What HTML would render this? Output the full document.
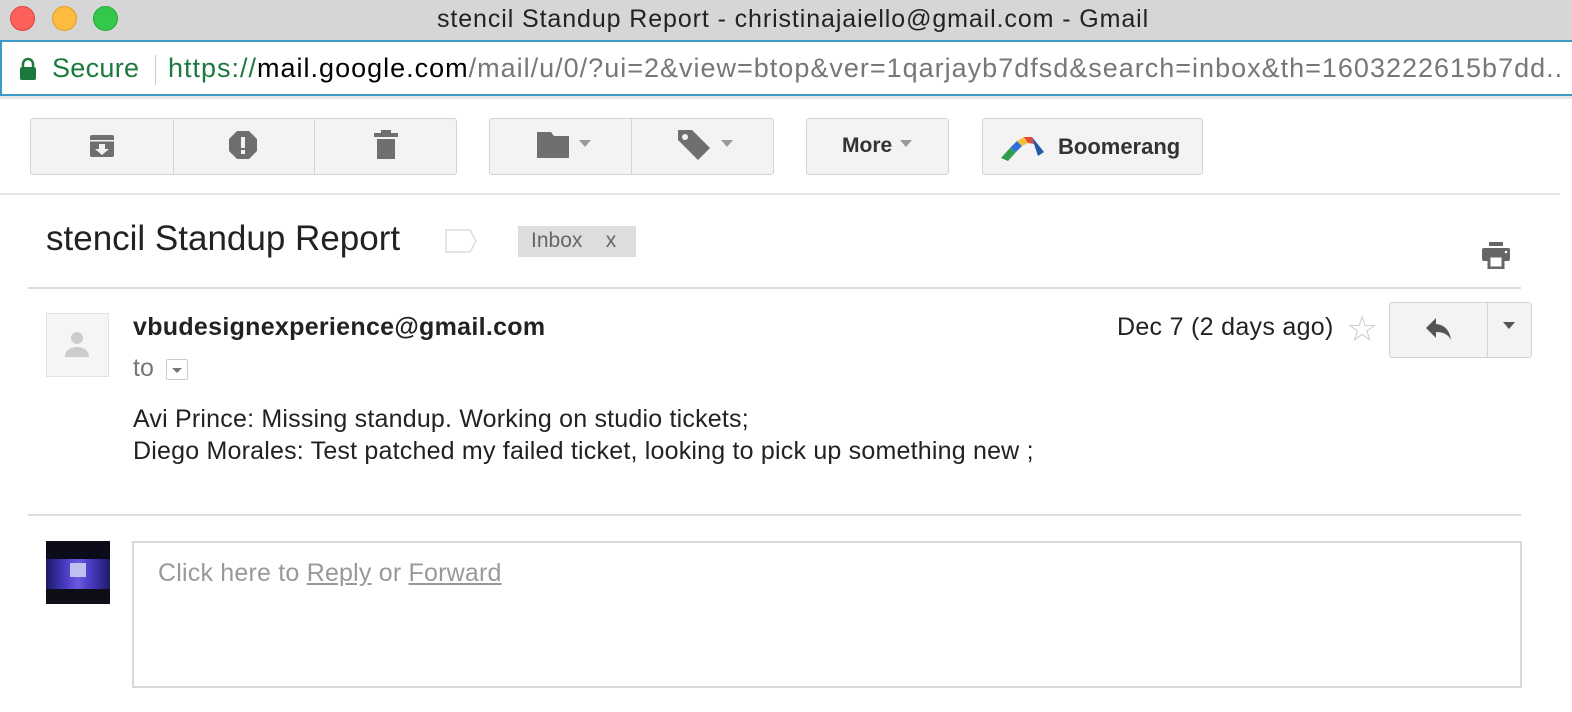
<!DOCTYPE html>
<html><head><style>
*{margin:0;padding:0;box-sizing:border-box}
body{width:1572px;height:712px;overflow:hidden;background:#fff;font-family:"Liberation Sans",Arial,sans-serif;position:relative}
.abs{position:absolute}
.btn{position:absolute;top:118px;height:57px;background:#f3f3f3;border:1px solid #d3d3d3;border-radius:3px}
.sep{position:absolute;top:0;width:1px;height:100%;background:#d3d3d3}
.tri{width:0;height:0;border-left:6px solid transparent;border-right:6px solid transparent;border-top:7px solid #999;position:absolute}
</style></head><body>
<div class="abs" style="left:0;top:0;width:1572px;height:40px;background:#d6d6d6"></div>
<div class="abs" style="left:10px;top:6px;width:25px;height:25px;border-radius:50%;background:#fc605b;border:1px solid #e0443e"></div>
<div class="abs" style="left:52px;top:6px;width:25px;height:25px;border-radius:50%;background:#fdbc40;border:1px solid #dea123"></div>
<div class="abs" style="left:93px;top:6px;width:25px;height:25px;border-radius:50%;background:#34c84a;border:1px solid #27aa35"></div>
<div class="abs" style="left:437px;top:5px;font-size:25px;letter-spacing:0.9px;color:#222;white-space:nowrap">stencil Standup Report - christinajaiello@gmail.com - Gmail</div>
<div class="abs" style="left:0;top:40px;width:1572px;height:56px;background:#fff;border-top:2px solid #3a9bc6;border-bottom:2px solid #3a9bc6;border-left:2px solid #3a9bc6"></div>
<div class="abs" style="left:0;top:96px;width:1572px;height:3px;background:#e6e6e6"></div>
<svg class="abs" style="left:19px;top:57px" width="18" height="24" viewBox="0 0 18 24"><path d="M4 10V7a5 5 0 0 1 10 0v3" fill="none" stroke="#1d7a3e" stroke-width="2.5"/><rect x="1" y="10" width="16" height="13" rx="2" fill="#1d7a3e"/></svg>
<div class="abs" style="left:52px;top:53px;font-size:27px;letter-spacing:0.3px;color:#1d7a3e">Secure</div>
<div class="abs" style="left:155px;top:55px;width:1px;height:30px;background:#ccc"></div>
<div class="abs" style="left:168px;top:53px;font-size:27px;letter-spacing:1px;white-space:nowrap;color:#777"><span style="color:#1d7a3e">https://</span><span style="color:#000">mail.google.com</span>/mail/u/0/?ui=2&amp;view=btop&amp;ver=1qarjayb7dfsd&amp;search=inbox&amp;th=1603222615b7dd..</div>
<div class="btn" style="left:30px;width:427px"><div class="sep" style="left:142px"></div><div class="sep" style="left:283px"></div></div>
<svg class="abs" style="left:88px;top:132px" width="28" height="28" viewBox="0 0 28 28"><rect x="2" y="3" width="24" height="22" rx="2" fill="#6f6f6f"/><rect x="2" y="8" width="24" height="1.5" fill="#f3f3f3"/><path d="M11 12h6v5h4l-7 6-7-6h4z" fill="#f3f3f3"/></svg>
<svg class="abs" style="left:228px;top:130px" width="30" height="30" viewBox="0 0 30 30"><path d="M9 1h12l8 8v12l-8 8H9l-8-8V9z" fill="#6f6f6f"/><rect x="13" y="7" width="4" height="11" fill="#f3f3f3"/><rect x="13" y="20" width="4" height="4" fill="#f3f3f3"/></svg>
<svg class="abs" style="left:372px;top:129px" width="28" height="32" viewBox="0 0 28 32"><rect x="9" y="1" width="10" height="3" fill="#6f6f6f"/><rect x="2" y="4" width="24" height="4" fill="#6f6f6f"/><rect x="5" y="10" width="18" height="20" fill="#6f6f6f"/></svg>
<div class="btn" style="left:489px;width:285px"><div class="sep" style="left:141px"></div></div>
<svg class="abs" style="left:536px;top:131px" width="34" height="28" viewBox="0 0 34 28"><path d="M1 1h14l3 4h15v22H1z" fill="#6f6f6f"/></svg>
<div class="tri" style="left:579px;top:140px"></div>
<svg class="abs" style="left:676px;top:128px" width="36" height="34" viewBox="0 0 36 34"><path d="M2 2h14l18 18-12 12L2 12z" fill="#6f6f6f"/><circle cx="9" cy="9" r="3" fill="#f3f3f3"/></svg>
<div class="tri" style="left:721px;top:140px"></div>
<div class="btn" style="left:806px;width:143px"></div>
<div class="abs" style="left:842px;top:134px;font-size:21px;font-weight:bold;color:#333">More</div>
<div class="tri" style="left:900px;top:140px"></div>
<div class="btn" style="left:982px;width:221px"></div>
<svg class="abs" style="left:1000px;top:134px" width="54" height="28" viewBox="0 0 54 28">
<path d="M1 24 L10 14 L16 18 L8 27z" fill="#2e9c48"/>
<path d="M10 14 L17 7 L22 12 L16 18z" fill="#2f6fd6"/>
<path d="M17 7 L24 3 L28 9 L22 12z" fill="#f3c13a"/>
<path d="M24 3 L32 3 L34 10 L28 9z" fill="#e4493c"/>
<path d="M32 3 L44 18 L38 22 L34 10z" fill="#1e5aa8"/></svg>
<div class="abs" style="left:1058px;top:134px;font-size:22px;font-weight:bold;color:#333">Boomerang</div>
<div class="abs" style="left:0;top:193px;width:1560px;height:2px;background:#e5e5e5"></div>
<div class="abs" style="left:46px;top:219px;font-size:35px;color:#222">stencil Standup Report</div>
<svg class="abs" style="left:445px;top:229px" width="32" height="24" viewBox="0 0 32 24"><path d="M1 1h24l6 11-6 11H1z" fill="#fff" stroke="#ddd" stroke-width="1.5"/></svg>
<div class="abs" style="left:518px;top:226px;width:118px;height:31px;background:#ddd;font-size:21px;color:#666;padding:3px 0 0 13px;white-space:pre">Inbox    x</div>
<svg class="abs" style="left:1481px;top:241px" width="30" height="28" viewBox="0 0 30 28"><rect x="8" y="1" width="14" height="4" fill="#666"/><rect x="1" y="7" width="28" height="13" rx="2" fill="#666"/><rect x="8" y="15" width="14" height="12" fill="#fff" stroke="#666" stroke-width="3"/><circle cx="25" cy="11" r="1.3" fill="#fff"/></svg>
<div class="abs" style="left:28px;top:287px;width:1493px;height:2px;background:#ddd"></div>
<div class="abs" style="left:46px;top:313px;width:63px;height:64px;background:#f5f5f5;border:1px solid #e2e2e2"></div>
<svg class="abs" style="left:64px;top:331px" width="26" height="28" viewBox="0 0 26 28"><circle cx="13" cy="7" r="6" fill="#ccc"/><path d="M1 26c0-7 6-10 12-10s12 3 12 10z" fill="#ccc"/></svg>
<div class="abs" style="left:133px;top:313px;font-size:25px;font-weight:bold;color:#222;letter-spacing:0.3px">vbudesignexperience@gmail.com</div>
<div class="abs" style="left:133px;top:354px;font-size:25px;color:#777">to</div>
<div class="abs" style="left:166px;top:359px;width:22px;height:21px;border:1px solid #ccc;border-radius:2px;background:#fff"></div>
<div class="tri" style="left:172px;top:368px;border-left-width:5px;border-right-width:5px;border-top:5px solid #777"></div>
<div class="abs" style="left:1117px;top:313px;font-size:25px;color:#222;letter-spacing:0.3px">Dec 7 (2 days ago)</div>
<div class="abs" style="left:1346px;top:309px;font-size:36px;color:#ccc;line-height:40px">☆</div>
<div class="abs" style="left:1389px;top:302px;width:143px;height:56px;background:#f3f3f3;border:1px solid #d3d3d3;border-radius:3px"><div class="sep" style="left:97px"></div></div>
<svg class="abs" style="left:1424px;top:316px" width="30" height="26" viewBox="0 0 30 26"><path d="M12 2L2 12l10 10v-6c7 0 12 2 15 8-1-8-5-15-15-16z" fill="#555"/></svg>
<div class="tri" style="left:1503px;top:322px;border-top-color:#555"></div>
<div class="abs" style="left:133px;top:403px;font-size:25px;color:#222;line-height:32px;letter-spacing:0.2px">Avi Prince: Missing standup. Working on studio tickets;<br>Diego Morales: Test patched my failed ticket, looking to pick up something new ;</div>
<div class="abs" style="left:28px;top:514px;width:1493px;height:2px;background:#ddd"></div>
<div class="abs" style="left:46px;top:541px;width:64px;height:63px;background:#0b0b1a;overflow:hidden">
<div class="abs" style="left:0;top:18px;width:64px;height:30px;background:linear-gradient(90deg,#1a1a6a,#4a3ac0 30%,#6a5ae0 50%,#4a3ac0 70%,#1a1a6a)"></div>
<div class="abs" style="left:24px;top:22px;width:16px;height:14px;background:#c0c0f0"></div>
<div class="abs" style="left:0;top:48px;width:64px;height:15px;background:#0e0e18"></div></div>
<div class="abs" style="left:132px;top:541px;width:1390px;height:147px;border:2px solid #d8d8d8"></div>
<div class="abs" style="left:158px;top:559px;font-size:25px;color:#999;letter-spacing:0.2px">Click here to <u>Reply</u> or <u>Forward</u></div>
</body></html>
